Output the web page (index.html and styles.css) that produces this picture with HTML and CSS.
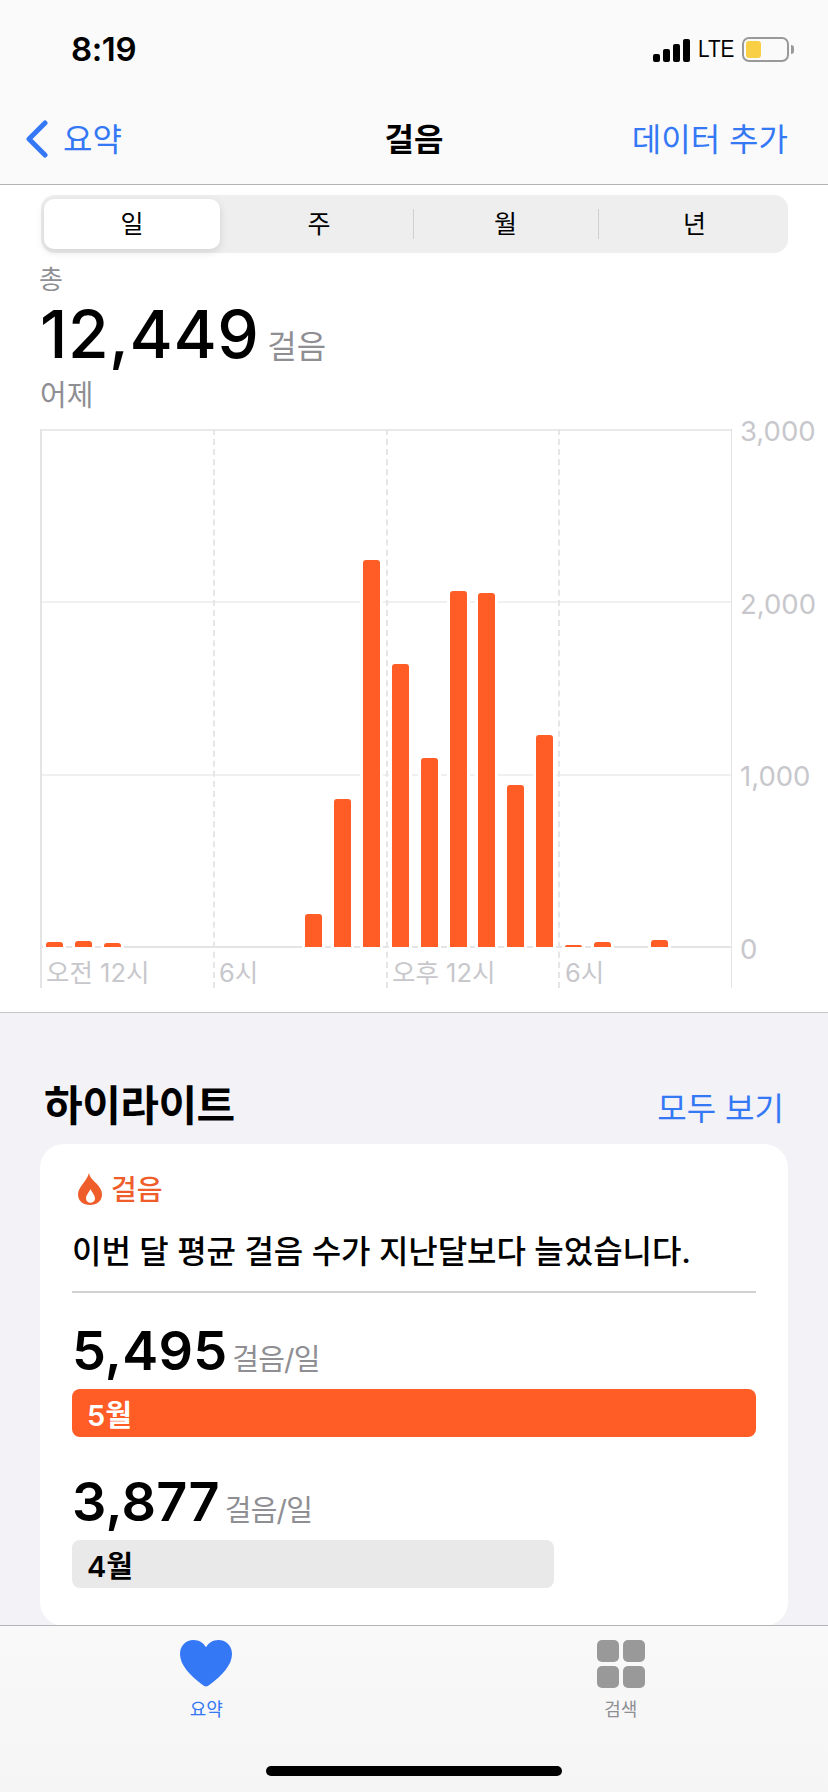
FILE: index.html
```html
<!DOCTYPE html>
<html lang="ko">
<head>
<meta charset="utf-8">
<title>걸음</title>
<link rel="stylesheet" href="styles.css">
</head>
<body>
<div class="screen">
  <header class="top">
    <div class="status">
      <span class="time">8:19</span>
      <div class="status-right">
        <div class="signal"><i class="s1"></i><i class="s2"></i><i class="s3"></i><i class="s4"></i></div>
        <span class="lte">LTE</span>
        <div class="battery"><div class="battery-body"><div class="battery-fill"></div></div><div class="battery-nub"></div></div>
      </div>
    </div>
    <nav class="nav">
      <a class="back">
        <svg class="chevron" viewBox="0 0 23 38" width="23" height="38"><path d="M20 3 L4 19 L20 35" fill="none" stroke="#3478f6" stroke-width="5" stroke-linecap="round" stroke-linejoin="round"/></svg>
        <span>요약</span>
      </a>
      <h1 class="title">걸음</h1>
      <a class="add">데이터 추가</a>
    </nav>
  </header>

  <main class="main">
    <section class="panel">
      <div class="segments">
        <div class="seg seg-on">일</div>
        <div class="seg seg-week">주</div>
        <div class="seg seg-div">월</div>
        <div class="seg seg-div seg-year">년</div>
      </div>
      <div class="total-label">총</div>
      <div class="total"><span class="total-num">12,449</span><span class="total-unit">걸음</span></div>
      <div class="total-date">어제</div>

      <div class="chart">
        <div class="hlines"><div></div><div></div><div></div></div>
        <div class="vlines"><div></div><div></div><div></div><div></div></div>
        <div class="bars">
          <i style="grid-column:1;height:5px"></i>
          <i style="grid-column:2;height:6px"></i>
          <i style="grid-column:3;height:4px"></i>
          <i style="grid-column:10;height:33px"></i>
          <i style="grid-column:11;height:148px"></i>
          <i style="grid-column:12;height:387px"></i>
          <i style="grid-column:13;height:283px"></i>
          <i style="grid-column:14;height:189px"></i>
          <i style="grid-column:15;height:356px"></i>
          <i style="grid-column:16;height:354px"></i>
          <i style="grid-column:17;height:162px"></i>
          <i style="grid-column:18;height:212px"></i>
          <i style="grid-column:19;height:2px"></i>
          <i style="grid-column:20;height:5px"></i>
          <i style="grid-column:22;height:7px"></i>
        </div>
        <div class="ylabels"><span>3,000</span><span>2,000</span><span>1,000</span><span>0</span></div>
        <div class="xlabels"><span>오전 12시</span><span>6시</span><span>오후 12시</span><span>6시</span></div>
      </div>
    </section>

    <section class="highlights">
      <div class="hl-head">
        <h2>하이라이트</h2>
        <a>모두 보기</a>
      </div>
      <article class="card">
        <div class="card-tag">
          <svg viewBox="0 0 24 32" width="24" height="32"><path fill="#ee5d2a" d="M11 0 C12 5 15 7 18 10 C21.5 13.5 24 17 24 21.5 C24 28 18.5 32 12 32 C5.5 32 0 28 0 21.5 C0 14 8.5 9 11 0Z"/><path fill="#fff" d="M12.5 16 C11 19.5 8 22 8 25.5 C8 28 10 29.8 12.5 29.8 C15 29.8 17 28 17 25.5 C17 22 14 19.5 12.5 16Z"/></svg>
          <span>걸음</span>
        </div>
        <p class="card-text">이번 달 평균 걸음 수가 지난달보다 늘었습니다.</p>
        <div class="metric metric-first">
          <div class="metric-val"><b>5,495</b><span>걸음/일</span></div>
          <div class="meter meter-on">5월</div>
        </div>
        <div class="metric">
          <div class="metric-val"><b>3,877</b><span>걸음/일</span></div>
          <div class="meter meter-off">4월</div>
        </div>
      </article>
    </section>
  </main>

  <footer class="tabs">
    <div class="tab-row">
      <div class="tab tab-on">
        <svg viewBox="0 0 52 47" width="52" height="47"><path fill="#3478f6" d="M26 46.5 C24.8 46.5 23.6 45.7 22 44.5 C10 35.5 0 25 0 14 C0 5.8 5.8 0 13.5 0 C19 0 23.5 2.8 26 7.3 C28.5 2.8 33 0 38.5 0 C46.2 0 52 5.8 52 14 C52 25 42 35.5 30 44.5 C28.4 45.7 27.2 46.5 26 46.5Z"/></svg>
        <span>요약</span>
      </div>
      <div class="tab tab-search">
        <div class="tiles"><i></i><i></i><i></i><i></i></div>
        <span>검색</span>
      </div>
    </div>
    <div class="home"></div>
  </footer>
</div>
</body>
</html>
```

FILE: styles.css
```css
* { box-sizing: border-box; }
html, body { margin: 0; padding: 0; }
body {
  width: 828px;
  height: 1792px;
  overflow: hidden;
  font-family: Inter, "Noto Sans CJK KR", "Noto Sans", sans-serif;
  color: #000;
  background: #f2f2f7;
}
.screen { display: flex; flex-direction: column; height: 1792px; }

/* header */
.top {
  flex: none;
  height: 185px;
  background: #fafafa;
  border-bottom: 1px solid #b4b4b6;
}
.status {
  height: 98px;
  display: flex;
  justify-content: space-between;
  padding: 37px 34px 0 71px;
}
.time { font-size: 33px; font-weight: 600; line-height: 24px; letter-spacing: -0.4px; }
.status-right { display: flex; height: 25px; align-items: center; }
.signal { display: flex; align-items: flex-end; gap: 3px; height: 23px; margin-top: 1px; }
.signal i { display: block; width: 7px; background: #000; border-radius: 2px; }
.s1 { height: 8px; } .s2 { height: 13px; } .s3 { height: 18px; } .s4 { height: 23px; }
.lte {
  display: block;
  width: 34px;
  margin-left: 8px;
  font-family: "Liberation Sans", sans-serif;
  font-size: 23px;
  line-height: 25px;
  white-space: nowrap;
  transform: scaleX(.9);
  transform-origin: left center;
}
.battery { display: flex; align-items: center; margin-left: 10px; }
.battery-body {
  width: 47px; height: 25px;
  border: 2px solid #999;
  border-radius: 7px;
  padding: 2px;
}
.battery-fill { width: 15px; height: 100%; background: #f9cf45; border-radius: 3px; }
.battery-nub { width: 3px; height: 9px; margin-left: 2px; background: #999; border-radius: 0 3px 3px 0; }

.nav {
  height: 86px;
  display: grid;
  grid-template-columns: 1fr auto 1fr;
  align-items: center;
  padding: 0 40px 8px 25px;
  font-size: 32px;
  color: #3478f6;
}
.back { display: flex; align-items: center; gap: 15px; }
.chevron { display: block; margin-top: 4px; }
.title { margin: 0 0 0 15px; font-size: 32px; font-weight: 600; color: #000; }
.add { justify-self: end; }

/* main */
.main { flex: 1; min-height: 0; overflow: hidden; }
.panel {
  background: #fff;
  height: 828px;
  padding-top: 10px;
  border-bottom: 1px solid #c6c6c8;
}
.segments {
  display: grid;
  grid-template-columns: 176px 193px 185px 189px;
  width: 747px;
  height: 58px;
  margin-left: 41px;
  padding: 4px 0 4px 3px;
  background: #eeeeef;
  border-radius: 14px;
  font-size: 25px;
}
.seg { position: relative; display: flex; align-items: center; justify-content: center; padding-bottom: 4px; }
.seg-week { padding-left: 5px; }
.seg-year { padding-left: 4px; }
.seg-on { background: #fff; border-radius: 10px; box-shadow: 0 3px 8px rgba(0,0,0,.12); }
.seg-div::before {
  content: "";
  position: absolute;
  left: 0; top: 10px; bottom: 10px;
  width: 1px;
  background: #cfcfd1;
}
.total-label { margin: 14px 0 0 39px; font-size: 26px; line-height: 26px; color: #8e8e93; }
.total { display: flex; align-items: baseline; margin: 6px 0 0 40px; height: 70px; line-height: 70px; }
.total-num { font-size: 66px; font-weight: 500; letter-spacing: 0.5px; }
.total-unit { font-size: 32px; color: #8e8e93; margin-left: 8px; }
.total-date { margin: 10px 0 0 40px; font-size: 29px; line-height: 34px; color: #8e8e93; }

.chart {
  display: grid;
  grid-template-columns: 692px 96px;
  grid-template-rows: 519px 40px;
  margin: 16px 0 0 40px;
}
.hlines, .vlines, .bars { grid-column: 1; grid-row: 1; }
.hlines {
  display: grid;
  grid-template-rows: repeat(3, 1fr);
  border-bottom: 2px solid #e4e4e6;
}
.hlines div { border-top: 2px solid #f0f0f1; }
.hlines div:first-child { border-top-color: #e9e9ea; }
.vlines {
  grid-row: 1 / 3;
  display: grid;
  grid-template-columns: repeat(4, 1fr);
  border-right: 1px solid #e4e4e6;
}
.vlines div { border-left: 2px dashed #e6e6e8; }
.vlines div:first-child { border-left: 2px solid #e4e4e6; }
.bars {
  display: grid;
  grid-template-columns: repeat(24, 1fr);
  align-items: end;
}
.bars i {
  grid-row: 1;
  display: block;
  width: 17px;
  margin-bottom: 1px;
  justify-self: center;
  background: #ff5c26;
  border-radius: 3px 3px 0 0;
  box-shadow: 0 0 0 3px #fff;
}
.ylabels {
  grid-column: 2; grid-row: 1 / 3;
  display: flex;
  flex-direction: column;
  height: 548px;
  justify-content: space-between;
  margin-top: -13px;
  padding-left: 8px;
  font-size: 27.5px;
  line-height: 30px;
  color: #c7c7cc;
}
.xlabels {
  grid-column: 1; grid-row: 2;
  display: grid;
  grid-template-columns: repeat(4, 1fr);
  align-items: center;
  padding-top: 4px;
  font-size: 25.5px;
  color: #c7c7cc;
}
.xlabels span { padding-left: 6px; white-space: nowrap; }

/* highlights */
.highlights { padding: 0 40px; }
.hl-head {
  display: flex;
  justify-content: space-between;
  align-items: center;
  height: 131px;
  padding: 47px 4px 0 4px;
}
.hl-head h2 { margin: 0; font-size: 42px; font-weight: 700; letter-spacing: -0.5px; }
.hl-head a { font-size: 32px; color: #3478f6; margin-top: 8px; }
.card {
  background: #fff;
  border-radius: 24px;
  height: 482px;
  padding: 24px 32px 0;
}
.card-tag { display: flex; align-items: center; gap: 9px; font-size: 28px; font-weight: 500; color: #ee5d2a; margin-left: 6px; }
.card-tag svg { display: block; }
.card-tag span { margin-bottom: 2px; }
.card-text {
  margin: 20px 0 0;
  padding-bottom: 17px;
  font-size: 32px;
  font-weight: 500;
  letter-spacing: -0.05px;
  line-height: 44px;
  border-bottom: 2px solid #d1d1d3;
  white-space: nowrap;
}
.metric { margin-top: 31px; }
.metric-first { margin-top: 24px; }
.metric-val { display: flex; align-items: baseline; height: 72px; line-height: 67px; }
.metric-val b { font-size: 54px; font-weight: 600; letter-spacing: 0.2px; }
.metric-val span { font-size: 29px; letter-spacing: -0.8px; color: #8e8e93; margin-left: 5px; }
.meter {
  display: flex;
  align-items: center;
  height: 48px;
  padding-left: 15px;
  border-radius: 8px;
  font-size: 29px;
  font-weight: 600;
}
.meter-on { width: 684px; background: #ff5c26; color: #fff; }
.meter-off { width: 482px; background: #e9e9ea; color: #000; }

/* tab bar */
.tabs {
  flex: none;
  height: 167px;
  background: linear-gradient(#f9f9f9, #f5f5f6);
  border-top: 1px solid #b4b4b6;
  display: flex;
  flex-direction: column;
  align-items: center;
}
.tab-row { display: grid; grid-template-columns: 1fr 1fr; width: 828px; padding: 14px 3px 0 0; height: 140px; }
.tab { display: flex; flex-direction: column; align-items: center; font-size: 18px; line-height: 22px; color: #8e8e93; }
.tab svg { display: block; height: 47px; margin-bottom: 12px; }
.tab-on { color: #3478f6; }
.tab-search { padding-left: 4px; }
.tiles { display: grid; grid-template-columns: 22px 22px; grid-template-rows: 22px 22px; gap: 4px; height: 48px; margin-bottom: 11px; }
.tiles i { background: #999; border-radius: 5px; }
.home { width: 296px; height: 10px; border-radius: 5px; background: #000; }
```
